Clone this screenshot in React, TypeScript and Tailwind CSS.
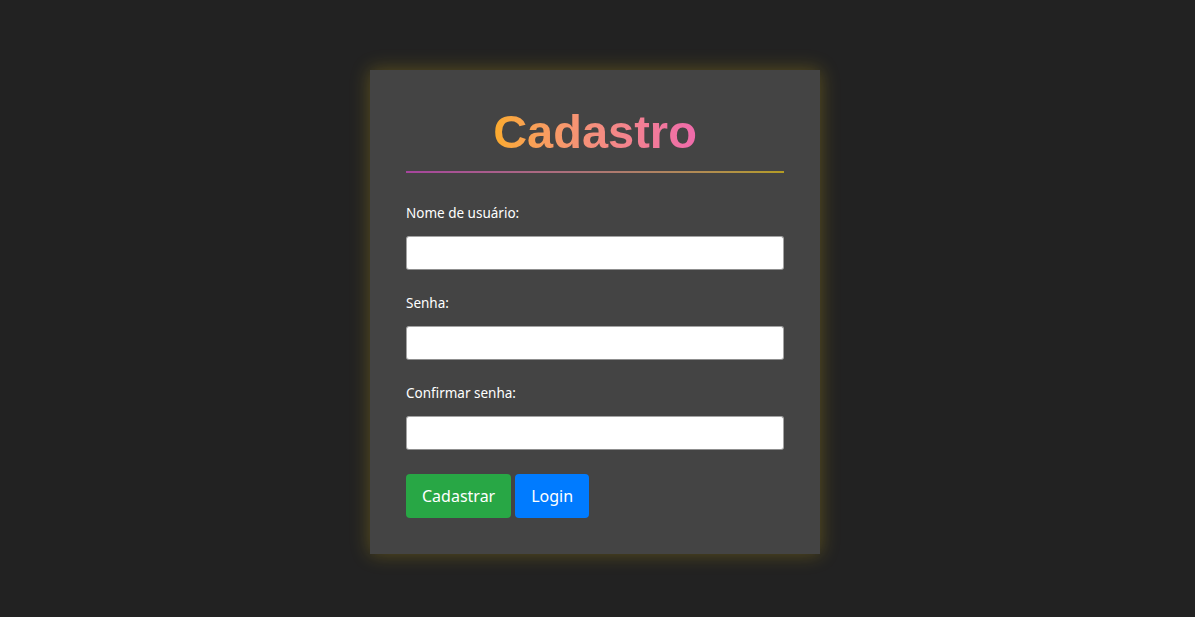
const fields = ["Nome de usuário:", "Senha:", "Confirmar senha:"]

export default function App() {
  return (
    <div className="min-h-screen bg-[#222222] pt-[70px] pr-[5px]" style={{ minHeight: 617 }}>
      <div className="mx-auto w-[450px] bg-[#444444] px-[36px] pt-[35px] pb-[35px] shadow-[0_0_18px_rgba(230,190,20,0.3)]">
        <div className="text-center h-[53px] leading-[53px]">
          <span className="inline-block bg-gradient-to-r from-[#fbab2a] to-[#ef6aab] bg-clip-text text-transparent font-bold text-[47px] font-['Liberation_Sans',Arial,sans-serif]">
            Cadastro
          </span>
        </div>
        <div className="mt-[13px] h-[2px] bg-gradient-to-r from-[#a6449d] to-[#b49c22]" />
        <form className="mt-[30px] font-['Noto_Sans','Open_Sans',sans-serif]">
          {fields.map((label, i) => (
            <div key={i} className="mb-[23px]">
              <label className="block text-[13.5px] leading-[20px] text-white mb-[13px]">{label}</label>
              <input
                type={i === 0 ? "text" : "password"}
                className="block w-full h-[34px] bg-white border border-[#a3a3a3] border-b-[#8f8f8f] rounded-[3px] outline-none"
              />
            </div>
          ))}
          <div className="flex gap-[4px] pt-[1px] pb-[1px]">
            <button type="button" className="h-[44px] px-[16px] rounded-[4px] bg-[#28a745] text-white text-[16px]">
              Cadastrar
            </button>
            <button type="button" className="h-[44px] px-[16px] rounded-[4px] bg-[#007bff] text-white text-[16px]">
              Login
            </button>
          </div>
        </form>
      </div>
    </div>
  )
}
